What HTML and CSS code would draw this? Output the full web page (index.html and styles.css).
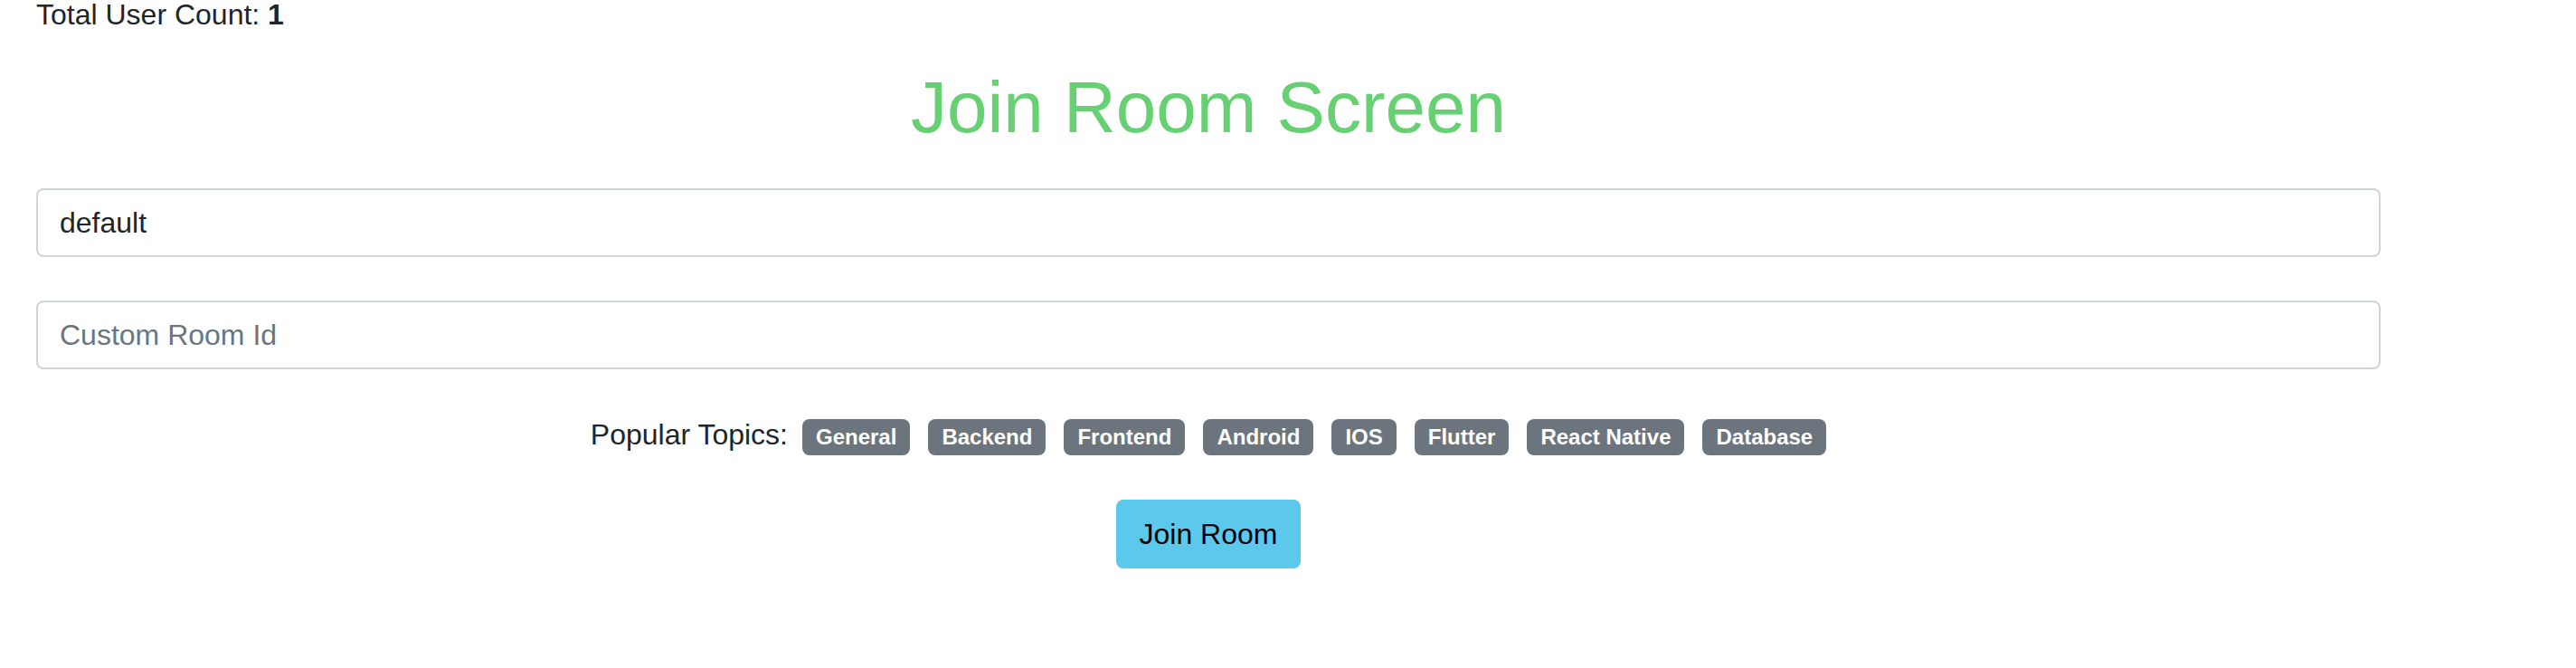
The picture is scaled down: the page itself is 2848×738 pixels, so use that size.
FILE: index.html
```html
<!DOCTYPE html>
<html lang="en">
<head>
<meta charset="utf-8">
<title>Join Room Screen</title>
<link rel="stylesheet" href="styles.css">
</head>
<body>
<div class="page">
  <div class="count">Total User Count: <strong>1</strong></div>
  <h1 class="title">Join Room Screen</h1>
  <form class="join-form">
    <input class="field" type="text" value="default">
    <input class="field" type="text" placeholder="Custom Room Id">
    <div class="topics">
      <span class="topics-label">Popular Topics:</span>
      <div class="badges">
        <span class="badge">General</span>
        <span class="badge">Backend</span>
        <span class="badge">Frontend</span>
        <span class="badge">Android</span>
        <span class="badge">IOS</span>
        <span class="badge">Flutter</span>
        <span class="badge">React Native</span>
        <span class="badge">Database</span>
      </div>
    </div>
    <div class="actions">
      <button class="btn-join" type="button">Join Room</button>
    </div>
  </form>
</div>
</body>
</html>
```

FILE: styles.css
```css
* { box-sizing: border-box; }

html, body {
  margin: 0;
  background: #ffffff;
}

body {
  font-family: "Liberation Sans", Arial, Helvetica, sans-serif;
  font-size: 32px;
  line-height: 1.5;
  color: #212529;
}

.page {
  padding: 0 216px 0 40px;
}

.count {
  line-height: 32px;
  margin: 0;
}

.count strong {
  font-weight: 700;
}

.title {
  margin: 39px 0 41px;
  font-size: 80px;
  font-weight: 400;
  line-height: 1.2;
  text-align: center;
  color: #66d073;
}

.join-form {
  display: flex;
  flex-direction: column;
  gap: 48px;
}

.field {
  display: block;
  width: 100%;
  height: 76px;
  padding: 12px 24px;
  font-family: inherit;
  font-size: 32px;
  line-height: 1.5;
  color: #212529;
  background: #ffffff;
  border: 2px solid #ced4da;
  border-radius: 8px;
  outline: none;
}

.field::placeholder {
  color: #6c757d;
  opacity: 1;
}

.topics {
  display: flex;
  justify-content: center;
  align-items: baseline;
  line-height: 48px;
}

.topics-label {
  margin-right: 16px;
}

.badges {
  display: flex;
  align-items: baseline;
  gap: 20px;
}

.badge {
  display: inline-block;
  padding: 8px 15px;
  font-size: 24px;
  font-weight: 700;
  line-height: 1;
  color: #ffffff;
  background: #6c757d;
  border-radius: 8px;
  white-space: nowrap;
}

.actions {
  display: flex;
  justify-content: center;
}

.btn-join {
  height: 76px;
  padding: 12px 24px;
  font-family: inherit;
  font-size: 32px;
  line-height: 1.5;
  color: #000000;
  background: #5bc8ec;
  border: 2px solid #5bc8ec;
  border-radius: 8px;
  cursor: pointer;
}
```
